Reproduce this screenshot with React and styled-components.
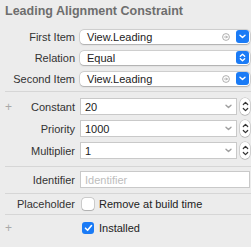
import React from "react";
import styled, { createGlobalStyle } from "styled-components";

const GlobalStyle = createGlobalStyle`
  html, body {
    margin: 0;
    padding: 0;
    background: #ececec;
    font-family: "Liberation Sans", Arial, sans-serif;
    -webkit-font-smoothing: antialiased;
  }
`;

const Panel = styled.div`
  width: 251px;
  height: 247px;
  background: #ececec;
  overflow: hidden;
`;

const Title = styled.div`
  height: 29px;
  box-sizing: border-box;
  padding: 3px 0 0 5px;
  font-size: 12.5px;
  line-height: 16px;
  font-weight: bold;
  color: #6e6e6e;
`;

const Section = styled.div`
  display: flex;
  flex-direction: column;
  gap: ${p => p.gap || 0}px;
  padding: ${p => p.top || 0}px 0 ${p => p.bottom || 0}px;
`;

const Divider = styled.div`
  height: 1px;
  margin-left: 5px;
  background: #d6d6d6;
`;

const Row = styled.div`
  display: grid;
  grid-template-columns: 75px 1fr;
  column-gap: 5px;
  align-items: center;
  height: ${p => p.h}px;
  padding-right: 1px;
`;

const LabelCell = styled.div`
  display: flex;
  align-items: center;
  justify-content: space-between;
  padding-left: 5px;
  font-size: 11px;
  color: #333;
  white-space: nowrap;
`;

const Plus = styled.span`
  color: #a8a8a8;
  font-size: 12px;
  font-weight: 300;
`;

const Popup = styled.div`
  display: flex;
  align-items: center;
  height: 14px;
  background: #fff;
  border-radius: 4px;
  box-shadow: 0 0 0 0.5px rgba(0, 0, 0, 0.18), 0 0.5px 1.5px rgba(0, 0, 0, 0.2);
  padding: 0 1px 0 7px;
  font-size: 11px;
  color: #222;
`;

const Value = styled.span`
  flex: 1;
`;

const BlueButton = styled.div`
  width: 13px;
  height: 13px;
  border-radius: 3px;
  background: #1a7bf6;
  display: flex;
  align-items: center;
  justify-content: center;
`;

const GoIcon = styled.svg`
  margin-right: 6px;
`;

const ComboWrap = styled.div`
  display: flex;
  align-items: center;
  gap: 3px;
  height: 100%;
`;

const Combo = styled.div`
  flex: 1;
  display: flex;
  align-items: center;
  height: 17px;
  box-sizing: border-box;
  background: #fff;
  border: 1px solid #c9c9c9;
  padding: 0 4px 0 4px;
  font-size: 11px;
  color: #222;
`;

const Stepper = styled.div`
  width: 10px;
  height: 17px;
  border-radius: 5px;
  background: #fff;
  box-shadow: 0 0 0 0.5px rgba(0, 0, 0, 0.2), 0 0.5px 1px rgba(0, 0, 0, 0.2);
  display: flex;
  flex-direction: column;
  align-items: center;
  justify-content: space-evenly;
`;

const TextField = styled.div`
  height: 17px;
  box-sizing: border-box;
  background: #fff;
  border: 1px solid #c9c9c9;
  padding: 0 4px;
  display: flex;
  align-items: center;
  font-size: 11px;
  color: #bdbdbd;
`;

const CheckRow = styled.label`
  display: flex;
  align-items: center;
  gap: 5px;
  padding-left: 2px;
  font-size: 11px;
  color: #222;
`;

const Box = styled.div`
  width: 12px;
  height: 12px;
  box-sizing: border-box;
  border-radius: 3px;
  background: ${p => (p.checked ? "#1a7bf6" : "#fff")};
  box-shadow: ${p =>
    p.checked
      ? "none"
      : "0 0 0 0.5px rgba(0,0,0,0.25), 0 0.5px 1px rgba(0,0,0,0.15)"};
  display: flex;
  align-items: center;
  justify-content: center;
`;

const ChevronDown = ({ color = "#fff", w = 7 }) => (
  <svg width={w} height="5" viewBox="0 0 7 5">
    <path d="M1 1.2 L3.5 3.6 L6 1.2" fill="none" stroke={color} strokeWidth="1.4" strokeLinecap="round" strokeLinejoin="round" />
  </svg>
);

const UpDown = ({ color = "#fff" }) => (
  <svg width="7" height="9" viewBox="0 0 7 9">
    <path d="M1.3 3.3 L3.5 1.2 L5.7 3.3 M1.3 5.7 L3.5 7.8 L5.7 5.7" fill="none" stroke={color} strokeWidth="1.3" strokeLinecap="round" strokeLinejoin="round" />
  </svg>
);

const Go = () => (
  <GoIcon width="8" height="8" viewBox="0 0 8 8">
    <circle cx="4" cy="4" r="3.4" fill="none" stroke="#9a9a9a" strokeWidth="0.8" />
    <path d="M2.2 4 H5.4 M4.1 2.7 L5.4 4 L4.1 5.3" fill="none" stroke="#9a9a9a" strokeWidth="0.8" />
  </GoIcon>
);

const Check = () => (
  <svg width="9" height="8" viewBox="0 0 9 8">
    <path d="M1.5 4.2 L3.6 6.3 L7.5 1.5" fill="none" stroke="#fff" strokeWidth="1.6" strokeLinecap="round" strokeLinejoin="round" />
  </svg>
);

const PopupRow = ({ label, value, go, updown }) => (
  <Row h={15}>
    <LabelCell>
      <span />
      {label}
    </LabelCell>
    <Popup>
      <Value>{value}</Value>
      {go && <Go />}
      <BlueButton>{updown ? <UpDown /> : <ChevronDown />}</BlueButton>
    </Popup>
  </Row>
);

const ComboRow = ({ label, value, plus }) => (
  <Row h={17}>
    <LabelCell>
      {plus ? <Plus>+</Plus> : <span />}
      {label}
    </LabelCell>
    <ComboWrap>
      <Combo>
        <Value>{value}</Value>
        <ChevronDown color="#9d9d9d" w={7} />
      </Combo>
      <Stepper>
        <ChevronDown color="#444" w={6} />
      </Stepper>
    </ComboWrap>
  </Row>
);

const StepperIcon = () => (
  <svg width="7" height="13" viewBox="0 0 7 13">
    <path d="M1.3 4.5 L3.5 2.3 L5.7 4.5 M1.3 8.5 L3.5 10.7 L5.7 8.5" fill="none" stroke="#333" strokeWidth="1.2" strokeLinecap="round" strokeLinejoin="round" />
  </svg>
);

const StepperRow = ({ label, value, plus }) => (
  <Row h={17}>
    <LabelCell>
      {plus ? <Plus>+</Plus> : <span />}
      {label}
    </LabelCell>
    <ComboWrap>
      <Combo>
        <Value>{value}</Value>
        <ChevronDown color="#a0a0a0" w={7} />
      </Combo>
      <Stepper>
        <StepperIcon />
      </Stepper>
    </ComboWrap>
  </Row>
);

export default function App() {
  return (
    <Panel>
      <GlobalStyle />
      <Title>Leading Alignment Constraint</Title>
      <Section gap={6} top={0} bottom={5}>
        <PopupRow label="First Item" value="View.Leading" go />
        <PopupRow label="Relation" value="Equal" updown />
        <PopupRow label="Second Item" value="View.Leading" go />
      </Section>
      <Divider />
      <Section gap={5} top={6} bottom={7}>
        <StepperRow label="Constant" value="20" plus />
        <StepperRow label="Priority" value="1000" />
        <StepperRow label="Multiplier" value="1" />
      </Section>
      <Divider />
      <Section top={4} bottom={5}>
        <Row h={17}>
          <LabelCell>
            <span />
            Identifier
          </LabelCell>
          <TextField>Identifier</TextField>
        </Row>
      </Section>
      <Divider />
      <Section top={4} bottom={4}>
        <Row h={12}>
          <LabelCell>
            <span />
            Placeholder
          </LabelCell>
          <CheckRow>
            <Box />
            Remove at build time
          </CheckRow>
        </Row>
      </Section>
      <Divider />
      <Section top={6} bottom={0}>
        <Row h={12}>
          <LabelCell>
            <Plus>+</Plus>
            <span />
          </LabelCell>
          <CheckRow>
            <Box checked>
              <Check />
            </Box>
            Installed
          </CheckRow>
        </Row>
      </Section>
    </Panel>
  );
}
